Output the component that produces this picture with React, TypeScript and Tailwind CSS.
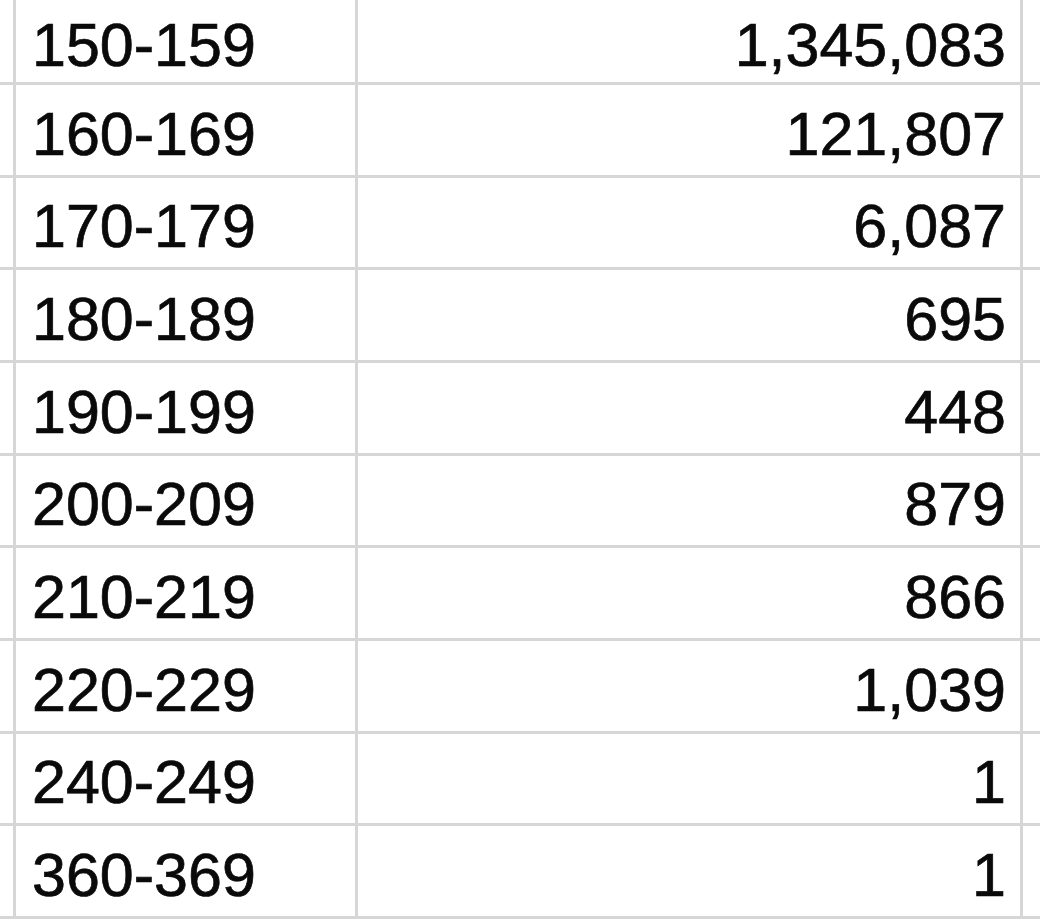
const rows = [
  ['150-159', '1,345,083'],
  ['160-169', '121,807'],
  ['170-179', '6,087'],
  ['180-189', '695'],
  ['190-199', '448'],
  ['200-209', '879'],
  ['210-219', '866'],
  ['220-229', '1,039'],
  ['240-249', '1'],
  ['360-369', '1'],
];

export default function App() {
  return (
    <div
      className="w-[1040px] h-[922px] overflow-hidden bg-white text-[#0a0a0a] text-[61px] [-webkit-text-stroke:0.7px_#0a0a0a]"
      style={{ fontFamily: '"Liberation Sans", Arial, sans-serif' }}
    >
      {rows.map(([range, count], i) => (
        <div
          key={range}
          className={`flex border-b-[3px] border-[#d6d6d6] ${i === 0 ? 'h-[85px]' : 'h-[92.67px]'}`}
        >
          <div className="w-[13px] shrink-0" />
          <div className="w-[342px] shrink-0 border-l-[3px] border-[#d6d6d6] flex items-center pl-[16px] pt-[9px] leading-none">
            {range}
          </div>
          <div className="w-[665px] shrink-0 border-l-[3px] border-[#d6d6d6] flex items-center justify-end pr-[14px] pt-[9px] leading-none">
            {count}
          </div>
          <div className="flex-1 border-l-[3px] border-[#d6d6d6]" />
        </div>
      ))}
    </div>
  );
}
